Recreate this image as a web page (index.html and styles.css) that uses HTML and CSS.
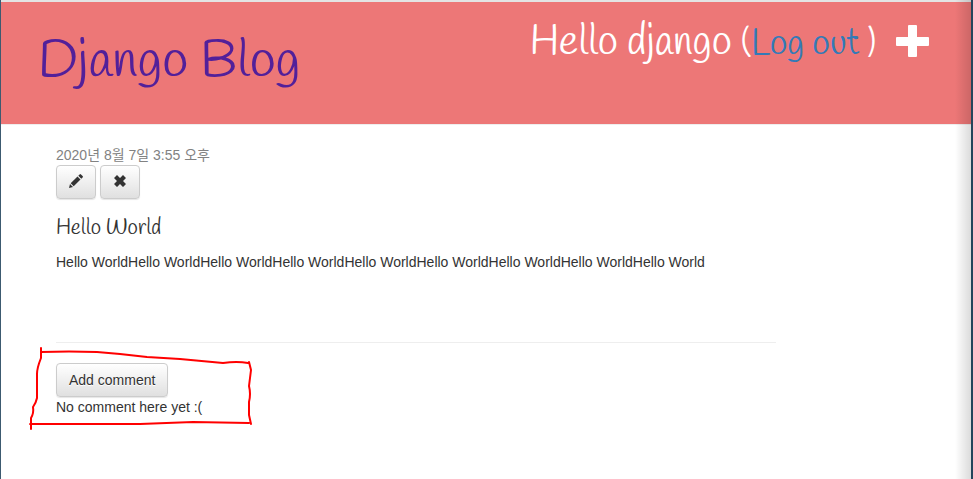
FILE: index.html
```html
<!DOCTYPE html>
<html lang="ko">
<head>
  <meta charset="UTF-8">
  <meta name="viewport" content="width=device-width, initial-scale=1.0">
  <title>Django Blog</title>
  <link rel="stylesheet" href="styles.css">
</head>
<body>
  <header class="page-header">
    <h1><a href="/">Django Blog</a></h1>
    <div class="top-menu">
      <p class="greeting">Hello django <small>(<a href="/accounts/logout/">Log out</a> )</small></p>
      <a href="/post/new/" class="new-post" aria-label="New post">
        <svg viewBox="0 0 33 33" width="33" height="33"><path d="M13 0h7q1 0 1 1v11h11q1 0 1 1v7q0 1-1 1H21v10q0 1-1 1h-7q-1 0-1-1V21H1q-1 0-1-1v-7q0-1 1-1h11V1q0-1 1-1z" fill="#fff"/></svg>
      </a>
    </div>
  </header>

  <main class="content">
    <article class="post">
      <time class="date" datetime="2020-08-07T15:55">2020년 8월 7일 3:55 오후</time>
      <div class="actions">
        <a class="btn" href="/post/1/edit/" aria-label="Edit">
          <svg viewBox="0 0 14 14" width="14" height="14"><path d="M0 14l1-4 3 3zM1.700 9.300l6.800-6.800 3 3-6.800 6.800zM9.300 1.700l1.300-1.300q.7-.7 1.400 0l1.600 1.600q.7.7 0 1.400l-1.300 1.300z" fill="#333"/></svg>
        </a>
        <a class="btn" href="/post/1/remove/" aria-label="Remove">
          <svg viewBox="0 0 14 14" width="14" height="14"><path d="M4 1l3 3 3-3 3 3-3 3 3 3-3 3-3-3-3 3-3-3 3-3-3-3z" fill="#333"/></svg>
        </a>
      </div>
      <h2>Hello World</h2>
      <p>Hello WorldHello WorldHello WorldHello WorldHello WorldHello WorldHello WorldHello WorldHello World</p>
    </article>
    <hr>
    <section class="comments">
      <a class="btn" href="/post/1/comment/">Add comment</a>
      <p>No comment here yet :(</p>
      <svg class="marker" viewBox="0 0 230 86" width="230" height="86" fill="none" stroke="#f00" stroke-width="2" stroke-linecap="round" stroke-linejoin="round">
        <path d="M12 2L12 12Q8 22 8 28L8 52Q7 57 4 61Q5 67 2 72L2 83M12 6Q40 5 68 6L91 8L118 11L151 13L194 17Q208 15 219 17M220 16L222 24L220 40Q222 48 220 56L220 69L222 78M1 78L58 78L111 78L164 76L220 77"/>
      </svg>
    </section>
  </main>
</body>
</html>
```
FILE: styles.css
```css
* {
  box-sizing: border-box;
}

body {
  position: relative;
  min-height: 100vh;
  margin: 0;
  border-left: 1px solid #3c5a70;
  border-right: 2px solid #24455c;
  background: #fff;
  color: #333;
  font-family: "Liberation Sans", "Noto Sans CJK KR", sans-serif;
  font-size: 14px;
  line-height: 20px;
}

/* shade along the right edge of the window */
body::after {
  content: "";
  position: absolute;
  top: 0;
  right: 0;
  bottom: 0;
  width: 16px;
  background: linear-gradient(to right, transparent, rgba(0, 0, 0, 0.14));
  pointer-events: none;
}

h1, h2, p {
  margin: 0;
}

a {
  color: #337ab7;
  text-decoration: none;
}

.page-header {
  display: flex;
  justify-content: space-between;
  align-items: flex-start;
  padding: 20px 42px 20px 37px;
  min-height: 125px;
  border-top: 2px solid #e4e4e4;
  border-bottom: 1px solid #eee;
  background-color: #ed7777;
  color: #fff;
}

h1, h2, .greeting {
  font-family: Handlee, Lato, sans-serif;
  font-weight: 400;
}

h1 {
  font-size: 53px;
  line-height: 80px;
}

h1 a {
  color: #52209a;
}

.top-menu {
  display: flex;
  gap: 20px;
}

.greeting {
  font-size: 41px;
  line-height: 42px;
}

.greeting small {
  font-size: 36px;
}

.new-post {
  padding-top: 3px;
}

.new-post svg,
.btn svg {
  display: block;
}

.content {
  padding: 20px 55px;
}

.content hr {
  max-width: 720px;
  margin: 70px 0 20px;
  border: 0;
  border-top: 1px solid #eee;
}

.date {
  display: block;
  color: #828282;
}

.actions {
  display: flex;
  gap: 4px;
}

.btn {
  display: inline-block;
  padding: 6px 12px;
  border: 1px solid #ccc;
  border-radius: 4px;
  background: linear-gradient(#fff, #e0e0e0);
  box-shadow: 0 1px 1px rgba(0, 0, 0, 0.1);
  color: #333;
  text-shadow: 0 1px 0 #fff;
}

.actions .btn {
  padding: 8px 12px 10px;
}

h2 {
  margin: 17px 0 12px;
  font-size: 21px;
  line-height: 24px;
}

.comments {
  position: relative;
}

.comments .btn {
  display: block;
  width: fit-content;
}

/* hand-drawn outline round the comment block */
.marker {
  position: absolute;
  top: -17px;
  left: -27px;
  pointer-events: none;
}
```
